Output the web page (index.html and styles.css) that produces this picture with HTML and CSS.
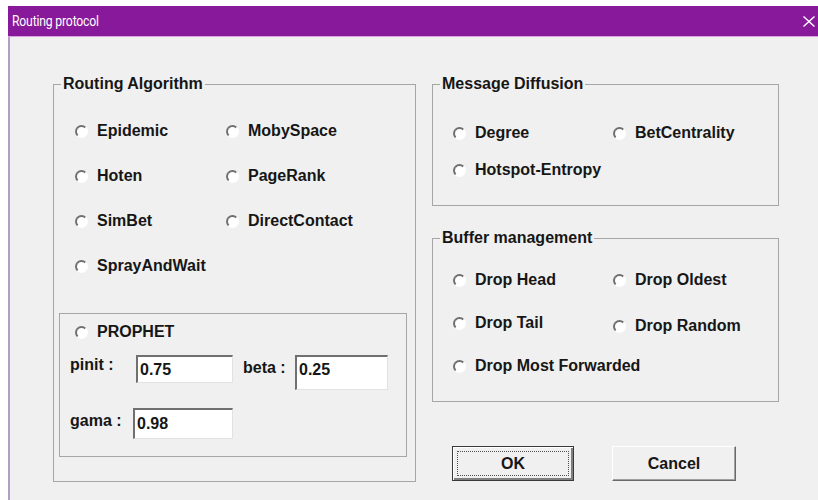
FILE: index.html
```html
<!DOCTYPE html>
<html lang="en">
<head>
<meta charset="utf-8">
<title>Routing protocol</title>
<link rel="stylesheet" href="styles.css">
</head>
<body>
<div class="dialog">
  <div class="titlebar">
    <span class="title">Routing protocol</span>
    <svg class="close" width="12" height="11" viewBox="0 0 12 11" aria-hidden="true">
      <path d="M0.5 0.5 L11.5 10.5 M11.5 0.5 L0.5 10.5" stroke="#fff" stroke-width="1.4" fill="none"/>
    </svg>
  </div>
  <div class="client">
    <fieldset class="group group-routing">
      <legend>Routing Algorithm</legend>
      <div class="radio-grid routing-grid">
        <label class="radio"><span class="dot"></span>Epidemic</label>
        <label class="radio"><span class="dot"></span>MobySpace</label>
        <label class="radio"><span class="dot"></span>Hoten</label>
        <label class="radio"><span class="dot"></span>PageRank</label>
        <label class="radio"><span class="dot"></span>SimBet</label>
        <label class="radio"><span class="dot"></span>DirectContact</label>
        <label class="radio"><span class="dot"></span>SprayAndWait</label>
      </div>
      <div class="prophet">
        <label class="radio prophet-radio"><span class="dot"></span>PROPHET</label>
        <div class="param-row row-first">
          <span class="param-label label-pinit">pinit :</span>
          <input class="field field-pinit" type="text" value="0.75">
          <span class="param-label label-beta">beta :</span>
          <input class="field field-beta" type="text" value="0.25">
        </div>
        <div class="param-row row-second">
          <span class="param-label label-gama">gama :</span>
          <input class="field field-gama" type="text" value="0.98">
        </div>
      </div>
    </fieldset>

    <div class="right-col">
      <fieldset class="group group-diffusion">
        <legend>Message Diffusion</legend>
        <div class="radio-grid diffusion-grid">
          <label class="radio"><span class="dot"></span>Degree</label>
          <label class="radio"><span class="dot"></span>BetCentrality</label>
          <label class="radio"><span class="dot"></span>Hotspot-Entropy</label>
        </div>
      </fieldset>

      <fieldset class="group group-buffer">
        <legend>Buffer management</legend>
        <div class="radio-grid buffer-grid">
          <label class="radio"><span class="dot"></span>Drop Head</label>
          <label class="radio"><span class="dot"></span>Drop Oldest</label>
          <label class="radio"><span class="dot"></span>Drop Tail</label>
          <label class="radio radio-low"><span class="dot"></span>Drop Random</label>
          <label class="radio"><span class="dot"></span>Drop Most Forwarded</label>
        </div>
      </fieldset>

      <div class="buttons">
        <button class="btn btn-default" type="button">OK</button>
        <button class="btn btn-cancel" type="button">Cancel</button>
      </div>
    </div>
  </div>
</div>
</body>
</html>
```

FILE: styles.css
```css
html, body {
  margin: 0;
  padding: 0;
  background: #ffffff;
  overflow: hidden;
}

body {
  width: 818px;
  height: 500px;
}

.dialog {
  margin: 6px 0 0 8px;
  width: 810px;
  height: 494px;
  display: flex;
  flex-direction: column;
  font-family: "Liberation Sans", Arial, sans-serif;
  font-weight: bold;
  font-size: 16px;
  color: #161616;
}

/* window caption */
.titlebar {
  height: 31px;
  box-sizing: border-box;
  background: #87199a;
  border-bottom: 1px solid #d7a3de;
  display: flex;
  align-items: center;
  justify-content: space-between;
  padding: 0 3px 0 4px;
}

.title {
  font-family: Roboto, "Liberation Sans", sans-serif;
  font-weight: normal;
  font-size: 14.5px;
  color: #ffffff;
  letter-spacing: -0.2px;
  transform: scaleX(0.84);
  transform-origin: left center;
}

.close {
  display: block;
}

/* dialog client area */
.client {
  flex: 1;
  background: #f0f0f0;
  border-left: 2px solid #b69cc2;
  display: grid;
  grid-template-columns: 363px 347px;
  column-gap: 16px;
  align-items: start;
  padding: 38px 0 0 43px;
}

/* group boxes */
.group {
  margin: 0;
  padding: 0;
  min-width: 0;
  box-sizing: border-box;
  border: 1px solid #a6a6a6;
}

.group legend {
  margin-left: 7px;
  padding: 0 2px;
  line-height: 18px;
  font-size: 16px;
}

.group-routing {
  height: 407px;
}

.group-diffusion {
  height: 131px;
}

.group-buffer {
  height: 173px;
  margin-top: 23px;
}

.right-col {
  display: flex;
  flex-direction: column;
}

/* radio buttons */
.radio-grid {
  display: grid;
  grid-auto-rows: 20px;
}

.routing-grid {
  padding: 28px 0 0 22px;
  grid-template-columns: 151px auto;
  row-gap: 25px;
}

.diffusion-grid {
  padding: 30px 0 0 21px;
  grid-template-columns: 160px auto;
  row-gap: 17px;
}

.buffer-grid {
  padding: 23px 0 0 21px;
  grid-template-columns: 160px auto;
  row-gap: 23px;
}

.radio {
  display: flex;
  align-items: center;
  gap: 10px;
  height: 20px;
  line-height: 20px;
  white-space: nowrap;
}

.radio-low {
  transform: translateY(3px);
}

.dot {
  width: 13px;
  height: 13px;
  box-sizing: border-box;
  border-radius: 50%;
  border: 2px solid;
  border-color: #6f6f6f #ffffff #ffffff #6f6f6f;
  background: #ffffff;
  flex: none;
  margin-left: -1px;
  margin-right: -1px;
}

/* PROPHET parameters */
.prophet {
  margin: 37px 8px 0 5px;
  height: 144px;
  box-sizing: border-box;
  border: 1px solid #a6a6a6;
  padding-top: 8px;
}

.prophet-radio {
  margin-left: 16px;
}

.param-row {
  display: flex;
  align-items: flex-start;
  padding-left: 10px;
}

.row-first {
  margin-top: 13px;
}

.row-second {
  margin-top: 18px;
}

.param-label {
  line-height: 20px;
}

.label-pinit {
  width: 66px;
}

.label-beta {
  width: 52px;
  margin-left: 10px;
  padding-top: 3px;
}

.label-gama {
  width: 63px;
  padding-top: 3px;
}

.field {
  box-sizing: border-box;
  margin: 0;
  padding: 0 0 0 2px;
  background: #ffffff;
  border-style: solid;
  border-width: 2px 1px 1px 2px;
  border-color: #707070 #e2e2e2 #e2e2e2 #707070;
  font-family: "Liberation Sans", Arial, sans-serif;
  font-weight: bold;
  font-size: 16px;
  color: #161616;
  outline: none;
}

.field-pinit {
  width: 97px;
  height: 28px;
}

.field-beta {
  width: 93px;
  height: 35px;
  padding-bottom: 7px;
}

.field-gama {
  width: 100px;
  height: 31px;
}

/* dialog buttons */
.buttons {
  display: flex;
  gap: 38px;
  margin-top: 44px;
  padding-left: 20px;
}

.btn {
  position: relative;
  height: 35px;
  box-sizing: border-box;
  background: #f0f0f0;
  font-family: "Liberation Sans", Arial, sans-serif;
  font-weight: bold;
  font-size: 16px;
  color: #161616;
  padding: 0;
  border: 1px solid;
  border-color: #ffffff #6a6a6a #6a6a6a #ffffff;
  box-shadow: inset -1px -1px 0 #a0a0a0;
}

.btn-cancel {
  width: 124px;
}

.btn-default {
  width: 122px;
  border-color: #3a3a3a;
  box-shadow: inset 1px 1px 0 #ffffff, inset -2px -2px 0 #808080;
}

/* keyboard focus rectangle on the default button */
.btn-default::after {
  content: "";
  position: absolute;
  inset: 4px;
  border: 1px dotted #505050;
}
```
